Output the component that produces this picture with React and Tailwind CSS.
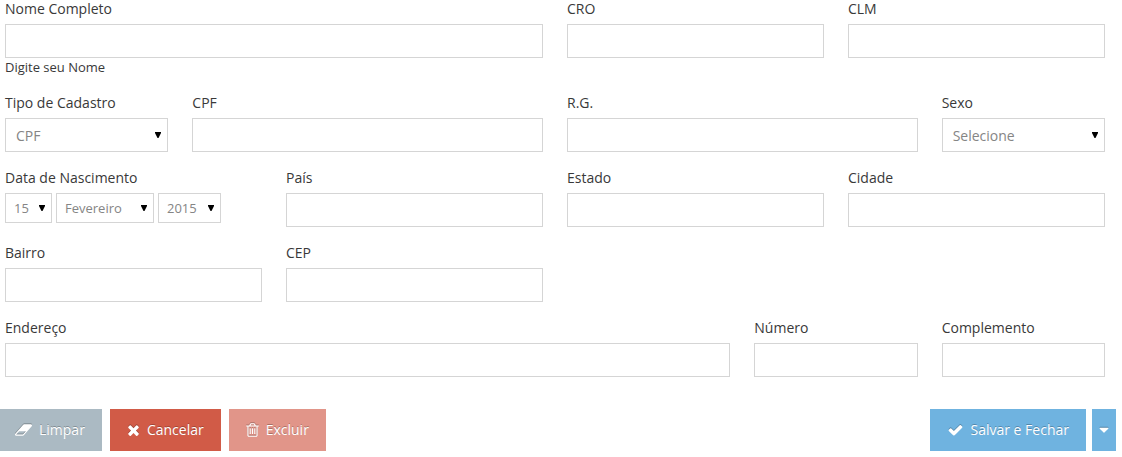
import { useState } from 'react';

const ICONS = {
  eraser: {
    box: '64 0 1920 1792',
    width: 17,
    d: 'M960 1408l336-384h-768l-336 384h768zm1013-1077q15 34 9.5 71.5t-30.5 65.5l-896 1024q-38 44-96 44h-768q-38 0-69.5-20.500t-47.5-54.500q-15-34-9.5-71.500t30.5-65.500l896-1024q38-44 96-44h768q38 0 69.500 20.500t47.500 54.500z',
  },
  times: {
    box: '192 0 1408 1792',
    width: 13,
    d: 'M1490 1322q0 40-28 68l-136 136q-28 28-68 28t-68-28l-294-294-294 294q-28 28-68 28t-68-28l-136-136q-28-28-28-68t28-68l294-294-294-294q-28-28-28-68t28-68l136-136q28-28 68-28t68 28l294 294 294-294q28-28 68-28t68 28l136 136q28 28 28 68t-28 68l-294 294 294 294q28 28 28 68z',
  },
  trash: {
    box: '192 0 1408 1792',
    width: 13,
    d: 'M704 736v576q0 14-9 23t-23 9h-64q-14 0-23-9t-9-23v-576q0-14 9-23t23-9h64q14 0 23 9t9 23zm256 0v576q0 14-9 23t-23 9h-64q-14 0-23-9t-9-23v-576q0-14 9-23t23-9h64q14 0 23 9t9 23zm256 0v576q0 14-9 23t-23 9h-64q-14 0-23-9t-9-23v-576q0-14 9-23t23-9h64q14 0 23 9t9 23zm128 724v-948h-896v948q0 22 7 40.5t14.5 27 10.5 8.5h832q3 0 10.5-8.5t14.5-27 7-40.5zm-672-1076h448l-48-117q-7-9-17-11h-317q-10 2-17 11zm928 32v64q0 14-9 23t-23 9h-96v948q0 83-47 143.5t-113 60.5h-832q-66 0-113-58.5t-47-141.5v-952h-96q-14 0-23-9t-9-23v-64q0-14 9-23t23-9h309l70-167q15-37 54-63t79-26h320q40 0 79 26t54 63l70 167h309q14 0 23 9t9 23z',
  },
  check: {
    box: '0 0 1792 1792',
    width: 17,
    d: 'M1671 566q0 40-28 68l-724 724-136 136q-28 28-68 28t-68-28l-136-136-362-362q-28-28-28-68t28-68l136-136q28-28 68-28t68 28l294 295 656-657q28-28 68-28t68 28l136 136q28 28 28 68z',
  },
  caret: {
    box: '320 0 1152 1792',
    width: 10,
    d: 'M1408 704q0 26-19 45l-448 448q-19 19-45 19t-45-19l-448-448q-19-19-19-45t19-45 45-19h896q26 0 45 19t19 45z',
  },
};

function Icon({ name }) {
  const { box, width, d } = ICONS[name];
  return (
    <svg
      viewBox={box}
      width={width}
      height={16}
      fill="currentColor"
      aria-hidden="true"
      className="shrink-0 drop-shadow-[0_-1px_0_rgba(0,0,0,0.25)]"
    >
      <path d={d} />
    </svg>
  );
}

function Field({ id, label, span, help }) {
  return (
    <div className={span}>
      <label htmlFor={id} className="mb-1.5 block leading-[18px]">
        {label}
      </label>
      <input
        id={id}
        type="text"
        className="block h-[34px] w-full border border-[#d5d5d5] bg-white px-2 text-[#858585] outline-none focus:border-[#f59942]"
      />
      {help && <p className="text-[13px] leading-[19px]">{help}</p>}
    </div>
  );
}

function Select({ className, arrow, wrapper, options, ...props }) {
  return (
    <div className={`relative ${wrapper}`}>
      <select
        {...props}
        className={`block w-full appearance-none border border-[#d5d5d5] bg-white text-[#858585] outline-none focus:border-[#f59942] ${className}`}
      >
        {options.map((option) => (
          <option key={option}>{option}</option>
        ))}
      </select>
      <svg
        viewBox="0 0 6 6"
        aria-hidden="true"
        className={`pointer-events-none absolute size-1.5 ${arrow}`}
      >
        <path d="M0 0h6v1L3.500 6h-1L0 1z" />
      </svg>
    </div>
  );
}

function SelectField({ id, label, span, options }) {
  return (
    <div className={span}>
      <label htmlFor={id} className="mb-1.5 block leading-[18px]">
        {label}
      </label>
      <Select
        id={id}
        options={options}
        wrapper="w-full"
        className="h-[34px] pl-2.5 pr-5 pt-0.5 text-sm"
        arrow="right-[7px] top-3.5"
      />
    </div>
  );
}

function Button({ color, icon, pad = 'px-[17px]', children, ...props }) {
  return (
    <button
      type="button"
      {...props}
      className={`flex h-[42px] cursor-pointer items-center gap-[7px] text-white text-shadow-[0_-1px_0_rgba(0,0,0,0.25)] ${pad} ${color}`}
    >
      <Icon name={icon} />
      {children}
    </button>
  );
}

const DAYS = ['15', ...Array.from({ length: 31 }, (_, i) => String(i + 1)).filter((d) => d !== '15')];
const MONTHS = ['Fevereiro', 'Janeiro', 'Março', 'Abril', 'Maio', 'Junho', 'Julho', 'Agosto', 'Setembro', 'Outubro', 'Novembro', 'Dezembro'];
const YEARS = Array.from({ length: 100 }, (_, i) => String(2015 - i));

export default function App() {
  const [version, setVersion] = useState(0);
  return (
    <form
      key={version}
      onSubmit={(e) => e.preventDefault()}
      className="bg-white font-['Open_Sans',sans-serif] text-sm text-[#393939]"
    >
      <div className="grid grid-cols-12 gap-x-6 gap-y-[17px] pl-[5px] pr-[17px]">
        <Field id="nome" label="Nome Completo" span="col-span-6" help="Digite seu Nome" />
        <Field id="cro" label="CRO" span="col-span-3" />
        <Field id="clm" label="CLM" span="col-span-3" />

        <SelectField id="tipo" label="Tipo de Cadastro" span="col-span-2" options={['CPF', 'CNPJ']} />
        <Field id="cpf" label="CPF" span="col-span-4" />
        <Field id="rg" label="R.G." span="col-span-4" />
        <SelectField id="sexo" label="Sexo" span="col-span-2" options={['Selecione', 'Feminino', 'Masculino']} />

        <div className="col-span-3">
          <label htmlFor="dia" className="mb-1.5 block leading-[18px]">
            Data de Nascimento
          </label>
          <div className="flex gap-1">
            <Select id="dia" options={DAYS} wrapper="w-[47px]" className="h-[30px] pl-2 text-[13px]" arrow="right-[7px] top-3" />
            <Select aria-label="Mês" options={MONTHS} wrapper="w-[98px]" className="h-[30px] pl-2 text-[13px]" arrow="right-[7px] top-3" />
            <Select aria-label="Ano" options={YEARS} wrapper="w-[63px]" className="h-[30px] pl-2 text-[13px]" arrow="right-[7px] top-3" />
          </div>
        </div>
        <Field id="pais" label="País" span="col-span-3" />
        <Field id="estado" label="Estado" span="col-span-3" />
        <Field id="cidade" label="Cidade" span="col-span-3" />

        <Field id="bairro" label="Bairro" span="col-span-3" />
        <Field id="cep" label="CEP" span="col-span-3" />

        <Field id="endereco" label="Endereço" span="col-start-1 col-span-8" />
        <Field id="numero" label="Número" span="col-span-2" />
        <Field id="complemento" label="Complemento" span="col-span-2" />
      </div>

      <div className="mt-8 flex justify-between pr-1.5">
        <div className="flex gap-2">
          <Button icon="eraser" color="bg-[#abbac3]" pad="pl-[15px] pr-[17px]" onClick={() => setVersion(version + 1)}>
            Limpar
          </Button>
          <Button icon="times" color="bg-[#d15b47]">Cancelar</Button>
          <Button icon="trash" color="bg-[#e19589]">Excluir</Button>
        </div>
        <div className="flex gap-1.5">
          <Button icon="check" color="bg-[#6fb3e0]">Salvar e Fechar</Button>
          <Button icon="caret" color="bg-[#6fb3e0]" pad="px-[7px]" aria-label="Mais opções" />
        </div>
      </div>
    </form>
  );
}
